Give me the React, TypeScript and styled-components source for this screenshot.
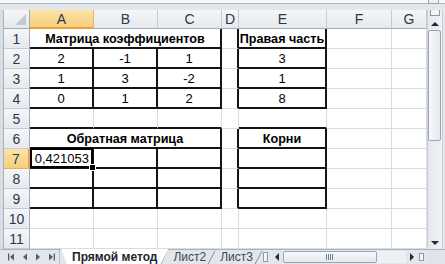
import React from 'react';
import styled, { createGlobalStyle, css } from 'styled-components';

const GlobalStyle = createGlobalStyle`
  html, body {
    margin: 0;
    padding: 0;
    overflow: hidden;
    background: #ffffff;
  }
  body {
    font-family: 'Liberation Sans', Arial, sans-serif;
  }
`;

const GRID = '#d9dde2';
const INK = '#151515';

const COLUMNS = [
  { name: 'A', width: 64 },
  { name: 'B', width: 64 },
  { name: 'C', width: 64 },
  { name: 'D', width: 17 },
  { name: 'E', width: 88 },
  { name: 'F', width: 65 },
  { name: 'G', width: 35 },
];
const ROWS = [1, 2, 3, 4, 5, 6, 7, 8, 9, 10, 11];
const SELECTED = { row: 7, col: 'A' };

type CellData = { text: string; bold?: boolean; span?: number; align?: 'left' | 'center' | 'right' };

const CELLS: Record<string, CellData> = {
  '1A': { text: 'Матрица коэффициентов', bold: true, span: 3 },
  '1E': { text: 'Правая часть', bold: true },
  '2A': { text: '2' },
  '2B': { text: '-1' },
  '2C': { text: '1' },
  '2E': { text: '3' },
  '3A': { text: '1' },
  '3B': { text: '3' },
  '3C': { text: '-2' },
  '3E': { text: '1' },
  '4A': { text: '0' },
  '4B': { text: '1' },
  '4C': { text: '2' },
  '4E': { text: '8' },
  '6A': { text: 'Обратная матрица', bold: true, span: 3 },
  '6E': { text: 'Корни', bold: true },
  '7A': { text: '0,421053', align: 'right' },
};

const inTable = (r: number) => (r >= 1 && r <= 4) || (r >= 6 && r <= 9);
const isMergedRow = (r: number) => r === 1 || r === 6;

// medium borders of the two little tables, worked out per cell edge
const bottomBlack = (r: number, c: string) => ['A', 'B', 'C', 'E'].includes(c) && r >= 1 && r <= 9;
const rightBlack = (r: number, c: string) => {
  if (!inTable(r)) return false;
  if (['C', 'D', 'E'].includes(c)) return true;
  if (['A', 'B'].includes(c)) return !isMergedRow(r);
  return false;
};

const Window = styled.div`
  width: 445px;
  height: 264px;
  display: flex;
  flex-direction: column;
  background: #dfe4ea;
  overflow: hidden;
`;

const TopStrip = styled.div`
  height: 10px;
  flex: none;
  background: linear-gradient(#f6f7f9 0 3px, #aeb8c4 3px 4px, #e3e7ec 4px);
  display: flex;
  justify-content: flex-end;
  padding-right: 5px;
`;

const FormulaToggle = styled.div`
  width: 9px;
  height: 3px;
  margin-right: 1px;
  border: 1px solid #9aa5b2;
  border-top: none;
  background: #eef0f3;
`;

const Main = styled.div`
  display: flex;
  height: 239px;
  flex: none;
`;

const LeftFrame = styled.div`
  width: 4px;
  flex: none;
  background: linear-gradient(90deg, #d8dde4 0 3px, #a9b3bf 3px);
`;

const Sheet = styled.div`
  display: grid;
  grid-template-columns: 26px ${COLUMNS.map((c) => `${c.width}px`).join(' ')};
  grid-template-rows: 19px repeat(11, 20px);
  width: 423px;
  background: #ffffff;
  overflow: hidden;
`;

const headerBase = css`
  box-sizing: border-box;
  display: flex;
  align-items: center;
  justify-content: center;
  font-size: 14px;
  color: #2a3a4c;
  background: linear-gradient(#f4f6f8, #e6e9ed);
`;

const Corner = styled.div`
  ${headerBase};
  position: relative;
  border-right: 1px solid #9fabb9;
  border-bottom: 1px solid #9fabb9;

  &::after {
    content: '';
    position: absolute;
    right: 3px;
    bottom: 3px;
    border-left: 11px solid transparent;
    border-bottom: 11px solid #c3cad3;
  }
`;

const ColHeader = styled.div<{ $active?: boolean }>`
  ${headerBase};
  border-right: 1px solid #c4cbd4;
  border-bottom: 1px solid #9fabb9;
  ${(p) =>
    p.$active &&
    css`
      background: linear-gradient(#fbe3a8, #f6cf7d);
      border-bottom: 2px solid #e9a23e;
      border-right-color: #e6b25f;
    `}
`;

const RowHeader = styled.div<{ $active?: boolean }>`
  ${headerBase};
  border-right: 1px solid #9fabb9;
  border-bottom: 1px solid #c4cbd4;
  ${(p) =>
    p.$active &&
    css`
      background: linear-gradient(#fbe3a8, #f6cf7d);
      border-right: 2px solid #e9a23e;
      border-bottom-color: #e6b25f;
    `}
`;

const Cell = styled.div<{
  $br: boolean;
  $bb: boolean;
  $span: number;
  $bold?: boolean;
  $align: 'left' | 'center' | 'right';
  $selected?: boolean;
}>`
  box-sizing: border-box;
  position: relative;
  grid-column: span ${(p) => p.$span};
  display: flex;
  align-items: center;
  justify-content: ${(p) => (p.$align === 'right' ? 'flex-end' : p.$align === 'left' ? 'flex-start' : 'center')};
  padding: 1px 3px 0;
  font-size: ${(p) => (p.$bold ? '12.6px' : '13px')};
  font-weight: ${(p) => (p.$bold ? 700 : 400)};
  color: #000;
  white-space: nowrap;
  border-right: ${(p) => (p.$br ? `2px solid ${INK}` : `1px solid ${GRID}`)};
  border-bottom: ${(p) => (p.$bb ? `2px solid ${INK}` : `1px solid ${GRID}`)};

  ${(p) =>
    p.$selected &&
    css`
      &::after {
        content: '';
        position: absolute;
        left: 0;
        top: -1px;
        right: -1px;
        bottom: -1px;
        border: 2px solid #000;
        pointer-events: none;
      }
      &::before {
        content: '';
        position: absolute;
        right: -4px;
        bottom: -4px;
        width: 5px;
        height: 5px;
        background: #000;
        border: 1px solid #fff;
        z-index: 2;
      }
    `}
`;

const VScroll = styled.div`
  width: 15px;
  flex: none;
  display: flex;
  flex-direction: column;
  background: linear-gradient(90deg, #e4e8ed, #f0f2f5);
  border-left: 1px solid #c9d0d8;
  box-sizing: border-box;
`;

const SplitBox = styled.div`
  height: 5px;
  margin: 0 2px 1px;
  border: 1px solid #8e9aa8;
  border-top: none;
  background: #f3f4f6;
`;

const ArrowButton = styled.div<{ $dir: 'up' | 'down' | 'left' | 'right' }>`
  flex: none;
  display: flex;
  align-items: center;
  justify-content: center;
  width: ${(p) => (p.$dir === 'up' || p.$dir === 'down' ? '100%' : '12px')};
  height: ${(p) => (p.$dir === 'up' || p.$dir === 'down' ? '13px' : '100%')};

  &::after {
    content: '';
    width: 0;
    height: 0;
    ${(p) =>
      p.$dir === 'up'
        ? css`
            border-left: 4px solid transparent;
            border-right: 4px solid transparent;
            border-bottom: 4px solid #1f2a36;
          `
        : p.$dir === 'down'
          ? css`
              border-left: 4px solid transparent;
              border-right: 4px solid transparent;
              border-top: 4px solid #1f2a36;
            `
          : p.$dir === 'left'
            ? css`
                border-top: 4px solid transparent;
                border-bottom: 4px solid transparent;
                border-right: 4px solid #1f2a36;
              `
            : css`
                border-top: 4px solid transparent;
                border-bottom: 4px solid transparent;
                border-left: 4px solid #1f2a36;
              `}
  }
`;

const VThumb = styled.div`
  height: 111px;
  flex: none;
  margin: 0 1px 0 0;
  box-sizing: border-box;
  border: 1px solid #9ba7b5;
  border-radius: 2px;
  background: linear-gradient(90deg, #f7f8fa, #e6e9ee);
`;

const Spacer = styled.div`
  flex: 1;
`;

const RightFrame = styled.div`
  width: 3px;
  flex: none;
  background: linear-gradient(90deg, #c9d0d8 0 1px, #e3e7ec 1px);
`;

const TabBar = styled.div`
  height: 15px;
  flex: none;
  display: flex;
  align-items: stretch;
  background: #e2e6eb;
  border-top: 1px solid #a9b3bf;
  box-sizing: border-box;
`;

const NavGroup = styled.div`
  display: flex;
  align-items: center;
  gap: 5px;
  padding: 0 0 0 8px;
  width: 51px;
  flex: none;
  border-right: 1px solid #b9c2cc;
  color: #4d5c6e;
`;

const Tabs = styled.div`
  display: flex;
  align-items: stretch;
  padding-left: 1px;
  flex: none;
`;

const Tab = styled.div<{ $active?: boolean }>`
  position: relative;
  flex: none;
  white-space: nowrap;
  display: flex;
  align-items: center;
  font-size: 12px;
  padding: 0 ${(p) => (p.$active ? 11 : 9)}px 0 ${(p) => (p.$active ? 11 : 5)}px;
  color: ${(p) => (p.$active ? '#1c2630' : '#3b4654')};
  font-weight: ${(p) => (p.$active ? 700 : 400)};
  margin-top: -1px;
  ${(p) =>
    p.$active &&
    css`
      background: #ffffff;
      clip-path: polygon(0 0, 100% 0, calc(100% - 7px) 100%, 6px 100%);
    `}

  &::after {
    content: '';
    position: absolute;
    right: 3px;
    top: 1px;
    height: 15px;
    width: 1px;
    background: #8593a3;
    transform: rotate(28deg);
  }
`;

const TabSplitter = styled.div`
  width: 3px;
  margin: 2px 3px 2px 1px;
  border: 1px solid #8e9aa8;
  background: #f3f4f6;
  flex: none;
`;

const HScroll = styled.div`
  display: flex;
  align-items: stretch;
  flex: 1;
  padding: 1px 0;
  box-sizing: border-box;
`;

const HThumb = styled.div`
  width: 94px;
  flex: none;
  box-sizing: border-box;
  border: 1px solid #9ba7b5;
  border-radius: 2px;
  background: linear-gradient(#f7f8fa, #e4e8ed);
  display: flex;
  align-items: center;
  justify-content: center;
  gap: 1px;
`;

const Grip = styled.span`
  width: 1px;
  height: 6px;
  background: #6f7d8d;
`;

const HTrack = styled.div`
  flex: 1;
  background: #eef1f4;
`;

const BottomCorner = styled.div`
  width: 18px;
  flex: none;
  background: #dfe4ea;
`;

const NavIcon = ({ kind }: { kind: 'first' | 'prev' | 'next' | 'last' }) => {
  const left = kind === 'first' || kind === 'prev';
  const bar = kind === 'first' || kind === 'last';
  return (
    <svg width="8" height="8" viewBox="0 0 8 8">
      {left ? <path d="M6 0.5 L2 4 L6 7.5 Z" fill="currentColor" /> : <path d="M2 0.5 L6 4 L2 7.5 Z" fill="currentColor" />}
      {bar && (left ? <rect x="0" y="0.5" width="1.3" height="7" fill="currentColor" /> : <rect x="6.7" y="0.5" width="1.3" height="7" fill="currentColor" />)}
    </svg>
  );
};

const renderRow = (r: number) => {
  const out: React.ReactNode[] = [
    <RowHeader key={`h${r}`} $active={r === SELECTED.row}>
      {r}
    </RowHeader>,
  ];
  let skip = 0;
  COLUMNS.forEach((col, i) => {
    if (skip > 0) {
      skip -= 1;
      return;
    }
    const data = CELLS[`${r}${col.name}`];
    const span = data?.span ?? 1;
    skip = span - 1;
    const last = COLUMNS[i + span - 1].name;
    out.push(
      <Cell
        key={`${r}${col.name}`}
        $span={span}
        $br={rightBlack(r, last)}
        $bb={bottomBlack(r, col.name)}
        $bold={data?.bold}
        $align={data?.align ?? 'center'}
        $selected={r === SELECTED.row && col.name === SELECTED.col}
      >
        {data?.text}
      </Cell>
    );
  });
  return out;
};

const App = () => {
  return (
    <Window>
      <GlobalStyle />
      <TopStrip>
        <FormulaToggle />
      </TopStrip>
      <Main>
        <LeftFrame />
        <Sheet>
          <Corner />
          {COLUMNS.map((c) => (
            <ColHeader key={c.name} $active={c.name === SELECTED.col}>
              {c.name}
            </ColHeader>
          ))}
          {ROWS.map(renderRow)}
        </Sheet>
        <VScroll>
          <SplitBox />
          <ArrowButton $dir="up" />
          <VThumb />
          <Spacer />
          <ArrowButton $dir="down" />
        </VScroll>
        <RightFrame />
      </Main>
      <TabBar>
        <NavGroup>
          <NavIcon kind="first" />
          <NavIcon kind="prev" />
          <NavIcon kind="next" />
          <NavIcon kind="last" />
        </NavGroup>
        <Tabs>
          <Tab $active>Прямой метод</Tab>
          <Tab>Лист2</Tab>
          <Tab>Лист3</Tab>
        </Tabs>
        <TabSplitter />
        <HScroll>
          <ArrowButton $dir="left" />
          <HThumb>
            <Grip />
            <Grip />
            <Grip />
            <Grip />
          </HThumb>
          <HTrack />
          <ArrowButton $dir="right" />
          <TabSplitter />
        </HScroll>
        <BottomCorner />
      </TabBar>
    </Window>
  );
};

export default App;
